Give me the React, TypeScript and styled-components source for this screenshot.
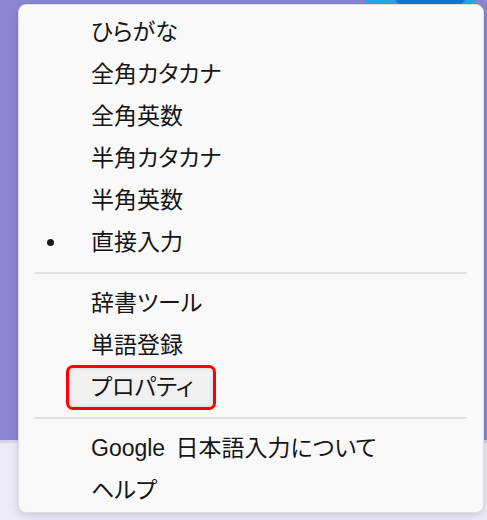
import React from "react";
import styled, { createGlobalStyle } from "styled-components";

const Global = createGlobalStyle`
  html, body { margin: 0; padding: 0; }
  body { width: 487px; height: 520px; overflow: hidden; }
`;

const Page = styled.div`
  width: 487px;
  height: 520px;
  box-sizing: border-box;
  padding: 4px 3px 0 18px;
  background:
    radial-gradient(ellipse 36px 10px at 430px 0px, #0a78d8 0 90%, transparent 100%),
    radial-gradient(ellipse 58px 12px at 420px 0px, #27a6ec 0 90%, transparent 100%),
    linear-gradient(to bottom, #8c85d2 0 440px, #d6d4ec 440px 443px, #ebeaf5 443px 100%);
  font-family: "Liberation Sans", "Noto Sans CJK JP", sans-serif;
`;

const Menu = styled.div`
  width: 466px;
  height: 509px;
  box-sizing: border-box;
  background: #f9f9f9;
  border: 1px solid #dedede;
  border-radius: 8px;
  box-shadow: 0 2px 8px rgba(0, 0, 0, 0.14);
  padding: 6px 0 0;
  display: flex;
  flex-direction: column;
`;

const Row = styled.div`
  position: relative;
  height: 42px;
  display: flex;
  align-items: center;
  font-size: 23px;
  font-feature-settings: "palt" 1;
  font-variant-east-asian: proportional-width;
  color: #161616;
  padding-left: 72px;
`;

const Label = styled.span`
  position: relative;
  line-height: 1;
  word-spacing: 4px;
  z-index: 1;
`;

const Bullet = styled.span`
  position: absolute;
  left: 28px;
  top: 50%;
  width: 7px;
  height: 7px;
  margin-top: -3px;
  border-radius: 50%;
  background: #1b1b1b;
`;

const Highlight = styled.span`
  position: absolute;
  left: 47px;
  top: -1px;
  width: 150px;
  height: 45px;
  box-sizing: border-box;
  border: 3px solid #ff0000;
  border-radius: 7px;
  background: #f1f1f1;
  box-shadow: inset 0 0 4px rgba(0, 0, 0, 0.12);
`;

const Separator = styled.div`
  height: 19px;
  display: flex;
  align-items: center;
  padding: 0 16px 0 16px;
  &::before {
    content: "";
    flex: 1;
    height: 2px;
    background: #e2e2e2;
  }
`;

type Item = { label: string; checked?: boolean; marked?: boolean } | "sep";

const items: Item[] = [
  { label: "ひらがな" },
  { label: "全角カタカナ" },
  { label: "全角英数" },
  { label: "半角カタカナ" },
  { label: "半角英数" },
  { label: "直接入力", checked: true },
  "sep",
  { label: "辞書ツール" },
  { label: "単語登録" },
  { label: "プロパティ", marked: true },
  "sep",
  { label: "Google 日本語入力について" },
  { label: "ヘルプ" },
];

export default function App() {
  return (
    <>
      <Global />
      <Page>
        <Menu>
          {items.map((it, i) =>
            it === "sep" ? (
              <Separator key={i} />
            ) : (
              <Row key={i}>
                {it.checked && <Bullet />}
                {it.marked && <Highlight />}
                <Label>{it.label}</Label>
              </Row>
            )
          )}
        </Menu>
      </Page>
    </>
  );
}
